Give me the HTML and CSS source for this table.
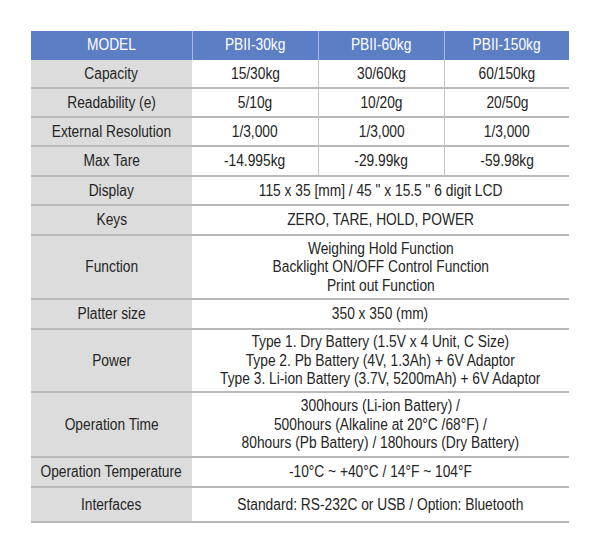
FILE: index.html
```html
<!DOCTYPE html>
<html>
<head>
<meta charset="utf-8">
<link rel="stylesheet" href="styles.css">
</head>
<body>
<div class="spec">
  <div class="hd lbl"><span class="t">MODEL</span></div>
  <div class="hd col"><span class="t">PBII-30kg</span></div>
  <div class="hd col"><span class="t">PBII-60kg</span></div>
  <div class="hd col"><span class="t">PBII-150kg</span></div>

  <div class="c lbl"><span class="t">Capacity</span></div>
  <div class="c"><span class="t">15/30kg</span></div>
  <div class="c col"><span class="t">30/60kg</span></div>
  <div class="c col"><span class="t">60/150kg</span></div>

  <div class="c lbl"><span class="t">Readability (e)</span></div>
  <div class="c"><span class="t">5/10g</span></div>
  <div class="c col"><span class="t">10/20g</span></div>
  <div class="c col"><span class="t">20/50g</span></div>

  <div class="c lbl"><span class="t">External Resolution</span></div>
  <div class="c"><span class="t">1/3,000</span></div>
  <div class="c col"><span class="t">1/3,000</span></div>
  <div class="c col"><span class="t">1/3,000</span></div>

  <div class="c lbl"><span class="t">Max Tare</span></div>
  <div class="c"><span class="t">-14.995kg</span></div>
  <div class="c col"><span class="t">-29.99kg</span></div>
  <div class="c col"><span class="t">-59.98kg</span></div>

  <div class="c lbl"><span class="t">Display</span></div>
  <div class="c span"><span class="t">115 x 35 [mm] / 45 " x 15.5 " 6 digit LCD</span></div>

  <div class="c lbl"><span class="t">Keys</span></div>
  <div class="c span"><span class="t">ZERO, TARE, HOLD, POWER</span></div>

  <div class="c lbl"><span class="t">Function</span></div>
  <div class="c span"><span class="t">Weighing Hold Function<br>Backlight ON/OFF Control Function<br>Print out Function</span></div>

  <div class="c lbl"><span class="t">Platter size</span></div>
  <div class="c span"><span class="t">350 x 350 (mm)</span></div>

  <div class="c lbl"><span class="t">Power</span></div>
  <div class="c span"><span class="t">Type 1. Dry Battery (1.5V x 4 Unit, C Size)<br>Type 2. Pb Battery (4V, 1.3Ah) + 6V Adaptor<br>Type 3. Li-ion Battery (3.7V, 5200mAh) + 6V Adaptor</span></div>

  <div class="c lbl"><span class="t">Operation Time</span></div>
  <div class="c span"><span class="t">300hours (Li-ion Battery) /<br>500hours (Alkaline at 20°C /68°F) /<br>80hours (Pb Battery) / 180hours (Dry Battery)</span></div>

  <div class="c lbl"><span class="t">Operation Temperature</span></div>
  <div class="c span"><span class="t">-10°C ~ +40°C / 14°F ~ 104°F</span></div>

  <div class="c lbl"><span class="t">Interfaces</span></div>
  <div class="c span"><span class="t">Standard: RS-232C or USB / Option: Bluetooth</span></div>
</div>
</body>
</html>
```
FILE: styles.css
```css
html, body {
  margin: 0;
  padding: 0;
  background: #ffffff;
}
body {
  padding: 31px 0 0 31px;
  font-family: "Liberation Sans", Arial, sans-serif;
  font-size: 16px;
  color: #252525;
}
.spec {
  display: grid;
  width: 538px;
  grid-template-columns: 161px 126px 126px 125px;
  grid-template-rows: 29px 29px 29px 29px 30px 29px 30px 64px 30px 63px 65px 30px 35px;
}
.spec > div {
  box-sizing: border-box;
  display: flex;
  align-items: center;
  justify-content: center;
  text-align: center;
  line-height: 18.5px;
  white-space: nowrap;
}
.t {
  display: inline-block;
  transform: scaleX(0.86);
  transform-origin: center;
}
.hd {
  background: #5b7ec4;
  color: #ffffff;
}
.hd.col {
  border-left: 1px solid #a9bbe4;
}
.c {
  border-bottom: 2px solid #b9b9b9;
  padding-top: 1px;
}
.c.lbl {
  background: #dcdcdc;
}
.c.col {
  border-left: 1px solid #c4c4c4;
}
.span {
  grid-column: span 3;
}
```
